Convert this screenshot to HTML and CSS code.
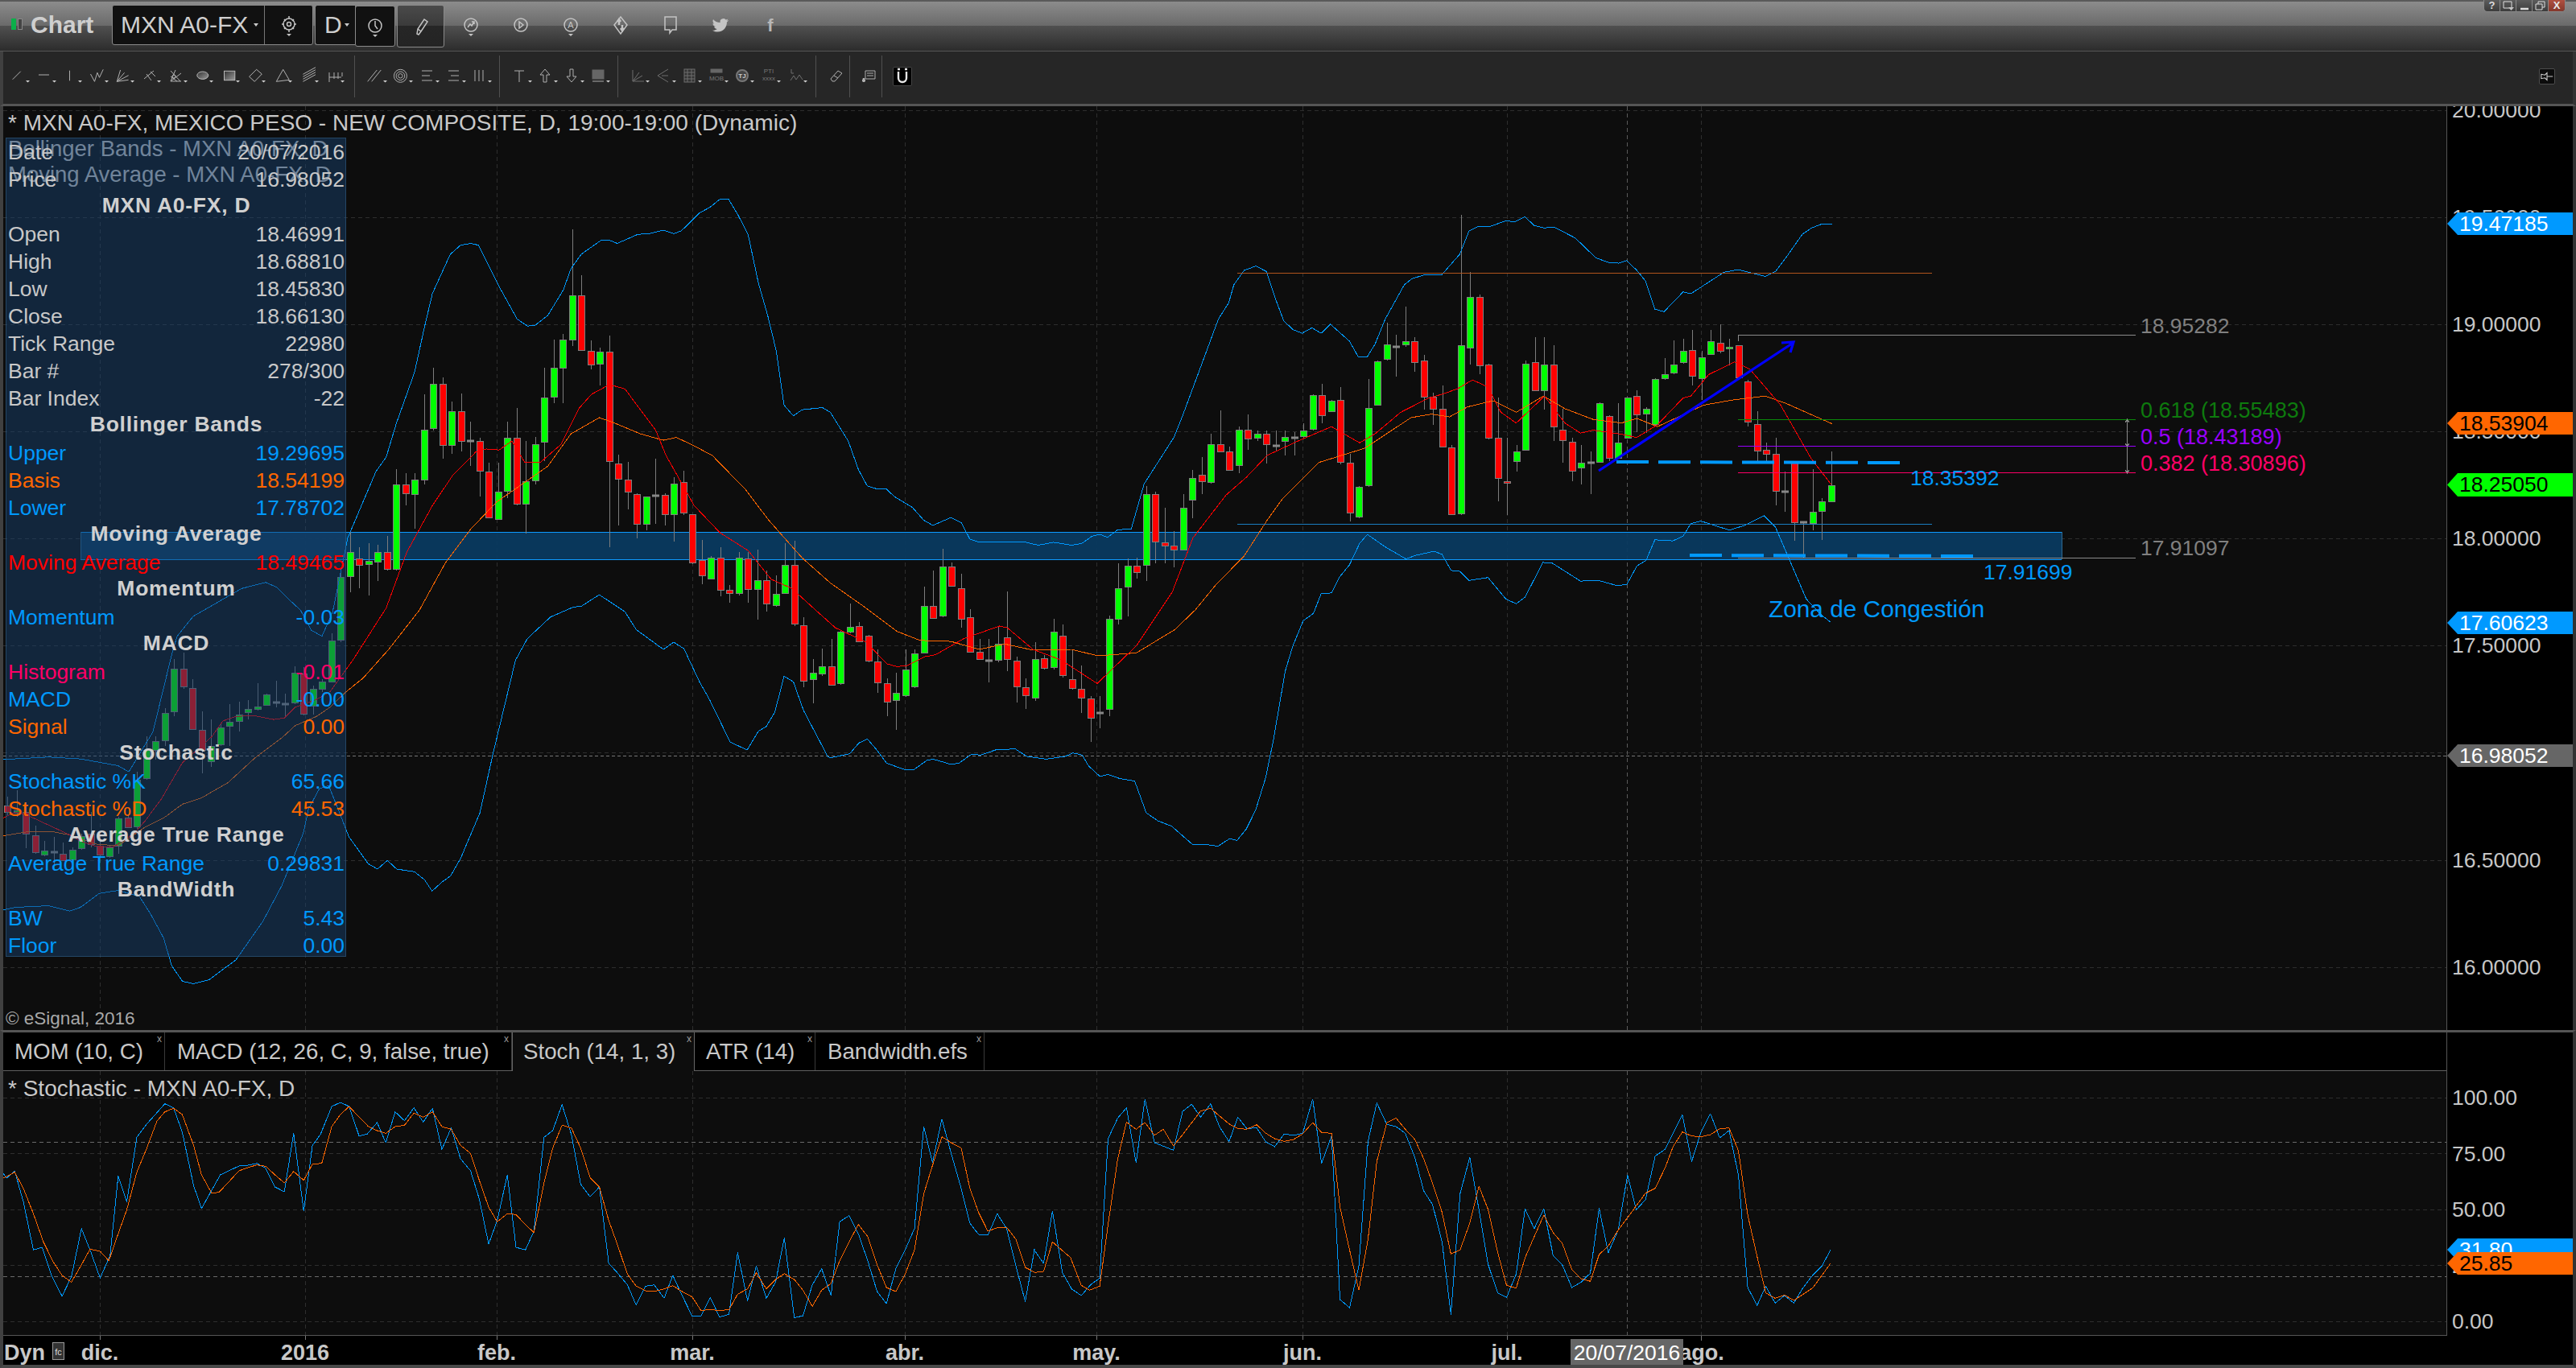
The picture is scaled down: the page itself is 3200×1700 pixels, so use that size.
FILE: index.html
```html
<!DOCTYPE html>
<html lang="es">
<head>
<meta charset="utf-8">
<title>Chart</title>
<link rel="stylesheet" href="styles.css">
</head>
<body>
<svg class="defs" width="0" height="0"><defs>
  <path id="dd" d="M27 17h5l-2.5 2.5z"/>
  <linearGradient id="shade" x1="0" y1="0" x2="1" y2="1"><stop offset="0" stop-color="#333"/><stop offset="1" stop-color="#999"/></linearGradient>
</defs></svg>
<div class="app">
  <header class="titlebar">
    <div class="led"><i class="led-on"></i><i class="led-off"></i></div>
    <div class="app-name">Chart</div>
    <div class="box box-symbol">
      <span class="sym">MXN A0-FX</span><span class="caret"></span>
      <span class="box-icon"><svg class="tb-ic" viewBox="0 0 24 28"><circle cx="12" cy="13" r="7"/><circle cx="12" cy="13" r="2.5"/><path d="M12 3v3M12 20v3M3 13h3M18 13h3M6 7l2 2M18 7l-2 2M6 19l2-2M18 19l-2-2"/><path class="solid" d="M9 25h6l-3 3z"/></svg></span>
    </div>
    <div class="box box-int"><span class="sym">D</span><span class="caret"></span></div>
    <div class="box box-clock"><svg class="tb-ic" viewBox="0 0 24 28"><circle cx="12" cy="13" r="8"/><path d="M12 7v6l3 4"/><path class="solid" d="M9 24h6l-3 3z"/></svg></div>
    <div class="box box-pen"><svg class="tb-ic" viewBox="0 0 24 28"><path d="M9 24l-2-1 1-6L16 5l4 3-8 12zM8 17l4 3"/></svg></div>
    <div class="title-icons">
      <svg class="tb-ic" viewBox="0 0 24 28"><circle cx="12" cy="13" r="8"/><path d="M8 16l3-4 2 2 3-5M13 9h3v3"/><path class="solid" d="M9 24h6l-3 3z"/></svg>
      <svg class="tb-ic" viewBox="0 0 24 28"><circle cx="12" cy="13" r="8"/><path d="M10 9l5 4-5 4z"/></svg>
      <svg class="tb-ic" viewBox="0 0 24 28"><circle cx="12" cy="13" r="8"/><text class="ic-txt" x="12" y="17" text-anchor="middle">A</text><path class="solid" d="M9 24h6l-3 3z"/></svg>
      <svg class="tb-ic" viewBox="0 0 24 28"><path d="M12 3l8 10-8 11-8-11z"/><path class="thick" d="M10 7v6M14 13v6M8 9l2-3 2 3M12 17l2 3 2-3"/></svg>
      <svg class="tb-ic" viewBox="0 0 24 28"><path d="M5 3h14v16h-5l-3 4v-4H5z"/></svg>
      <svg class="tb-ic" viewBox="0 0 24 28"><path class="solid" d="M22 7c-1 .5-1.600.6-2.500.7 1-.6 1.500-1.300 1.800-2.200-.9.500-1.800.9-2.700 1a4 4 0 0 0-6.900 3.600C8 10 5 8.500 3 6c-1 2-.5 4.300 1.300 5.500-.7 0-1.300-.2-1.800-.5 0 2 1.400 3.700 3.300 4.100-.6.200-1.200.2-1.800.1.500 1.600 2 2.800 3.800 2.800C6 19.200 4 20 2 19.700 4 21 6 21.600 8.500 21.600c7.500 0 11.700-6.300 11.400-12C20.700 9 21.500 8 22 7z"/></svg>
      <svg class="tb-ic" viewBox="0 0 24 28"><text class="fb" x="12" y="21" text-anchor="middle">f</text></svg>
    </div>
    <div class="win-btns">
      <span class="win-btn">?</span>
      <span class="win-btn"><svg class="win-ic" viewBox="0 0 14 12"><path d="M1 1h10v8H1z"/><path class="solid" d="M7 8h7l-3.500 4z"/></svg></span>
      <span class="win-btn"><svg class="win-ic" viewBox="0 0 14 12"><path class="thick" d="M2 10h10"/></svg></span>
      <span class="win-btn"><svg class="win-ic" viewBox="0 0 14 12"><path d="M1 4h8v7H1zM4 4V1h8v7H9"/></svg></span>
      <span class="win-btn win-close">X</span>
    </div>
  </header>

  <nav class="toolbar">
    <div class="tgroup tg1">
      <svg class="ic" viewBox="0 0 32.600 24"><path d="M10.700 15.700L20.700 5.700"/><use href="#dd"/></svg>
      <svg class="ic" viewBox="0 0 32.600 24"><path d="M10 10h13"/><use href="#dd"/></svg>
      <svg class="ic" viewBox="0 0 32.600 24"><path d="M16.500 4.700v12.600"/><use href="#dd"/></svg>
      <svg class="ic" viewBox="0 0 32.600 24"><path d="M9.500 9l5 9.300L17.900 7.300l2.600 6 4.700-10"/><use href="#dd"/></svg>
      <svg class="ic" viewBox="0 0 32.600 24"><path d="M10.300 18.300L14.600 4M10.300 18.300L19.600 7.300M10.300 18.300L24.600 10.700M10.300 18.300l14.300-2"/><use href="#dd"/></svg>
      <svg class="ic" viewBox="0 0 32.600 24"><path d="M11 15L23 5M14 9l6 8M19 6l6 6"/><use href="#dd"/></svg>
      <svg class="ic" viewBox="0 0 32.600 24"><path d="M11 18L17 4M11 18L24 8M11 18h13M11 5l12 13M11 12l8 6"/><circle cx="15" cy="12" r="2"/><use href="#dd"/></svg>
      <svg class="ic" viewBox="0 0 32.600 24"><ellipse class="shaded" cx="18.800" cy="10.700" rx="7" ry="4.700"/><use href="#dd"/></svg>
      <svg class="ic" viewBox="0 0 32.600 24"><rect class="shaded" x="12.500" y="5.300" width="13.300" height="11.400"/><use href="#dd"/></svg>
      <svg class="ic" viewBox="0 0 32.600 24"><path d="M11.600 12.300l9-9 6.700 5.700-9 9.300z"/><use href="#dd"/></svg>
      <svg class="ic" viewBox="0 0 32.600 24"><path d="M20.700 3.300l7.600 13-16 2z"/><use href="#dd"/></svg>
      <svg class="ic" viewBox="0 0 32.600 24"><path d="M12.400 9.300L28 .7M12.400 12.300L28 3.700M12.400 15.300L28 6.700M12.400 18.300L28 9.700"/><use href="#dd"/></svg>
      <svg class="ic" viewBox="0 0 32.600 24"><path d="M13 7v12M13 13h15M19 7v8M24 7v8M29 7v5"/><use href="#dd"/></svg>
    </div>
    <div class="tgroup tg2">
      <svg class="ic" viewBox="0 0 32.600 24"><path d="M7.700 18.300L19.300 4M12.700 18.300L24.300 4"/><use href="#dd"/></svg>
      <svg class="ic" viewBox="0 0 32.600 24"><circle cx="16.400" cy="11.300" r="8"/><circle cx="16.400" cy="11.300" r="5.300"/><circle cx="16.400" cy="11.300" r="2.700"/><use href="#dd"/></svg>
      <svg class="ic" viewBox="0 0 32.600 24"><path d="M10 5h13M10 11h10M10 17h13"/><use href="#dd"/></svg>
      <svg class="ic" viewBox="0 0 32.600 24"><path d="M10 5h13M13 11h10M10 17h13"/><use href="#dd"/></svg>
      <svg class="ic" viewBox="0 0 32.600 24"><path d="M11 4v14M16 4v14M21 4v14"/><use href="#dd"/></svg>
    </div>
    <div class="tgroup tg3">
      <svg class="ic" viewBox="0 0 32.600 24"><path d="M10 5h12M16 5v14"/><use href="#dd"/></svg>
      <svg class="ic" viewBox="0 0 32.600 24"><path d="M16 3l6 7h-4v9h-4v-9h-4z"/><use href="#dd"/></svg>
      <svg class="ic" viewBox="0 0 32.600 24"><path d="M16 19l6-7h-4V3h-4v9h-4z"/><use href="#dd"/></svg>
      <svg class="ic" viewBox="0 0 32.600 24"><rect class="block" x="10" y="4" width="14" height="11"/><path d="M10 18h14"/><use href="#dd"/></svg>
    </div>
    <div class="tgroup tg4 dim">
      <svg class="ic" viewBox="0 0 32.600 24"><path d="M11 18V4M11 18L19 7M11 18l12-7M11 18h14"/><use href="#dd"/></svg>
      <svg class="ic" viewBox="0 0 32.600 24"><path d="M9 11L22 3M9 11l13 8M14 11h8"/><use href="#dd"/></svg>
      <svg class="ic" viewBox="0 0 32.600 24"><rect class="grid-ic" x="10" y="3" width="13" height="16"/><path d="M10 7h13M10 11h13M10 15h13M14 3v16M19 3v16"/><use href="#dd"/></svg>
      <svg class="ic" viewBox="0 0 32.600 24"><rect class="block" x="10" y="3" width="14" height="4"/><text class="mini" x="17" y="17" text-anchor="middle">MOB</text><use href="#dd"/></svg>
      <svg class="ic" viewBox="0 0 32.600 24"><circle class="solid-c" cx="17" cy="11" r="7"/><text class="mini mini-b" x="17" y="14" text-anchor="middle">TJ</text><use href="#dd"/></svg>
      <svg class="ic" viewBox="0 0 32.600 24"><text class="mini" x="17" y="8" text-anchor="middle">PTI</text><text class="mini" x="17" y="17" text-anchor="middle">xxxx</text><use href="#dd"/></svg>
      <svg class="ic" viewBox="0 0 32.600 24"><path d="M12 3v5h3M11 17l4-6 3 5 4-6 4 6"/><use href="#dd"/></svg>
    </div>
    <div class="tgroup tg5">
      <svg class="ic" viewBox="0 0 32.600 24"><path d="M10 15L19 5l5 3-9 10h-3zM14 11l5 3"/></svg>
    </div>
    <div class="tgroup tg6">
      <svg class="ic" viewBox="0 0 32.600 24"><path d="M12 5h12v10H12zM14 8h8M14 11h8"/><path class="thick" d="M10 14v5M8 17h4"/></svg>
    </div>
    <div class="magnet"><svg class="mag-ic" viewBox="0 0 22 22"><path d="M6 5v8a5 5 0 0 0 10 0V5"/><path d="M5 2h3M14 2h3"/></svg></div>
    <div class="pin"><svg class="pin-ic" viewBox="0 0 20 20"><path d="M2 7l5 1 3-3v10l-3-3-5 1zM10 10h8"/></svg></div>
  </nav>

  <section class="pane pane-main">
    <div class="plot">
      <svg class="chart" viewBox="4 132 3035 1148" width="3035" height="1148">
        <g id="main-grid" class="grid"></g>
        <path class="cross-h" d="M4 939.500H3039"/>
        <rect class="zone" x="100" y="661" width="2461" height="34"/>
        <path class="zone-edge" d="M100 661.500H2561M100 695.500H2561"/>
        <path class="zone-end" d="M100.500 661V695M2561.500 661V695"/>
        <g id="candles"></g>
        <g id="main-lines"></g>
        <path class="ln-res" d="M1537 339.500H2400"/>
        <path class="ln-sup" d="M1537 651.500H2400"/>
        <path class="ln-fib gray" d="M2159 424V416.500H2653M2159 693.500H2653"/>
        <path class="ln-fib green" d="M2159 521.500H2653"/>
        <path class="ln-fib purple" d="M2159 554.500H2653"/>
        <path class="ln-fib pink" d="M2159 587.500H2653"/>
        <path class="ln-fib gray" d="M2642.500 522V587M2640 525l2.500-4 2.500 4M2640 584l2.500 4 2.500-4M2640 551l2.500 4 2.500-4"/>
        <path class="ln-dash" d="M2008 574L2360 575"/>
        <path class="ln-dash" d="M2099 690L2451 691"/>
        <path class="ln-arrow" d="M1986 585L2226 427M2213 426L2228 425 2224 438"/>
        <text class="lbl l-blue" x="2373" y="603">18.35392</text>
        <text class="lbl l-blue" x="2464" y="720">17.91699</text>
        <text class="lbl l-gray" x="2659" y="414">18.95282</text>
        <text class="lbl-fib l-green" x="2659" y="519">0.618 (18.55483)</text>
        <text class="lbl-fib l-purple" x="2659" y="552">0.5 (18.43189)</text>
        <text class="lbl-fib l-pink" x="2659" y="585">0.382 (18.30896)</text>
        <text class="lbl l-gray" x="2659" y="690">17.91097</text>
        <text class="lbl-zone" x="2197" y="767">Zona de Congestión</text>
      </svg>
      <div class="plot-head">
        <div class="head-main">* MXN A0-FX, MEXICO PESO - NEW COMPOSITE, D, 19:00-19:00 (Dynamic)</div>
        <div>Bollinger Bands - MXN A0-FX, D</div>
        <div>Moving Average - MXN A0-FX, D</div>
      </div>
      <aside class="legend">
        <div class="row"><span>Date</span><span>20/07/2016</span></div>
        <div class="row"><span>Price</span><span>16.98052</span></div>
        <div class="hdr">MXN A0-FX, D</div>
        <div class="row"><span>Open</span><span>18.46991</span></div>
        <div class="row"><span>High</span><span>18.68810</span></div>
        <div class="row"><span>Low</span><span>18.45830</span></div>
        <div class="row"><span>Close</span><span>18.66130</span></div>
        <div class="row"><span>Tick Range</span><span>22980</span></div>
        <div class="row"><span>Bar #</span><span>278/300</span></div>
        <div class="row"><span>Bar Index</span><span>-22</span></div>
        <div class="hdr">Bollinger Bands</div>
        <div class="row c-blue"><span>Upper</span><span>19.29695</span></div>
        <div class="row c-orange"><span>Basis</span><span>18.54199</span></div>
        <div class="row c-blue"><span>Lower</span><span>17.78702</span></div>
        <div class="hdr">Moving Average</div>
        <div class="row c-red"><span>Moving Average</span><span>18.49465</span></div>
        <div class="hdr">Momentum</div>
        <div class="row c-blue"><span>Momentum</span><span>-0.03</span></div>
        <div class="hdr">MACD</div>
        <div class="row c-pink"><span>Histogram</span><span>-0.01</span></div>
        <div class="row c-blue"><span>MACD</span><span>-0.00</span></div>
        <div class="row c-orange"><span>Signal</span><span>0.00</span></div>
        <div class="hdr">Stochastic</div>
        <div class="row c-blue"><span>Stochastic %K</span><span>65.66</span></div>
        <div class="row c-orange"><span>Stochastic %D</span><span>45.53</span></div>
        <div class="hdr">Average True Range</div>
        <div class="row c-blue"><span>Average True Range</span><span>0.29831</span></div>
        <div class="hdr">BandWidth</div>
        <div class="row c-blue"><span>BW</span><span>5.43</span></div>
        <div class="row c-blue"><span>Floor</span><span>0.00</span></div>
      </aside>
      <div class="copyright">© eSignal, 2016</div>
    </div>
    <div class="axis axis-main">
      <div class="tick">20.00000</div>
      <div class="tick">19.50000</div>
      <div class="tick">19.00000</div>
      <div class="tick">18.50000</div>
      <div class="tick">18.00000</div>
      <div class="tick">17.50000</div>
      <div class="tick">17.00000</div>
      <div class="tick">16.50000</div>
      <div class="tick">16.00000</div>
      <div class="tag tag-blue m1">19.47185</div>
      <div class="tag tag-orange m2">18.53904</div>
      <div class="tag tag-green m3">18.25050</div>
      <div class="tag tag-blue m4">17.60623</div>
      <div class="tag tag-gray m5">16.98052</div>
    </div>
  </section>

  <section class="tabs-row">
    <div class="tabs">
      <div class="tab t-mom">MOM (10, C)<span class="tab-x">x</span></div>
      <div class="tab t-macd">MACD (12, 26, C, 9, false, true)<span class="tab-x">x</span></div>
      <div class="tab t-stoch tab-active">Stoch (14, 1, 3)<span class="tab-x">x</span></div>
      <div class="tab t-atr">ATR (14)<span class="tab-x">x</span></div>
      <div class="tab t-band">Bandwidth.efs<span class="tab-x">x</span></div>
    </div>
    <div class="tabs-axis"></div>
  </section>

  <section class="pane pane-stoch">
    <div class="plot plot-stoch">
      <svg class="chart" viewBox="4 1331 3035 328" width="3035" height="328">
        <g id="stoch-grid" class="grid"></g>
        <g id="stoch-lines"></g>
      </svg>
      <div class="stoch-title">* Stochastic - MXN A0-FX, D</div>
    </div>
    <div class="axis axis-stoch">
      <div class="tick">100.00</div>
      <div class="tick">75.00</div>
      <div class="tick">50.00</div>
      <div class="tick">25.00</div>
      <div class="tick">0.00</div>
      <div class="tag tag-blue s1">31.80</div>
      <div class="tag tag-orange s2">25.85</div>
    </div>
  </section>

  <footer class="timeaxis">
    <svg class="time-svg" viewBox="4 1660 3192 36" width="3192" height="36">
      <path class="time-ticks" d="M124.500 1660v5M379.500 1660v5M617.500 1660v5M860.500 1660v5M1124.500 1660v5M1362.500 1660v5M1618.500 1660v5M1872.500 1660v5M2113.500 1660v6"/>
      <text class="t-lbl" x="5" y="1690">Dyn</text>
      <rect class="dyn-box" x="65.500" y="1668.500" width="14" height="21"/>
      <text class="dyn-mini" x="72.500" y="1684" text-anchor="middle">fc</text>
      <text class="t-lbl" x="124" y="1690" text-anchor="middle">dic.</text>
      <text class="t-lbl" x="379" y="1690" text-anchor="middle">2016</text>
      <text class="t-lbl" x="617" y="1690" text-anchor="middle">feb.</text>
      <text class="t-lbl" x="860" y="1690" text-anchor="middle">mar.</text>
      <text class="t-lbl" x="1124" y="1690" text-anchor="middle">abr.</text>
      <text class="t-lbl" x="1362" y="1690" text-anchor="middle">may.</text>
      <text class="t-lbl" x="1618" y="1690" text-anchor="middle">jun.</text>
      <text class="t-lbl" x="1872" y="1690" text-anchor="middle">jul.</text>
      <text class="t-lbl" x="2114" y="1690" text-anchor="middle">ago.</text>
      <rect class="cur-box" x="1951" y="1664" width="140" height="32"/>
      <text class="cur-lbl" x="2021" y="1690" text-anchor="middle">20/07/2016</text>
    </svg>
  </footer>
</div>
<script src="chart.js"></script>
</body>
</html>
```

FILE: styles.css
```css
* { box-sizing: border-box; }
html, body { margin: 0; padding: 0; background: #000; }
body { width: 3200px; height: 1700px; overflow: hidden; font-family: "Liberation Sans", Arial, sans-serif; color: #c8c8c8; }
.defs { position: absolute; }
.app { width: 3200px; height: 1700px; display: flex; flex-direction: column; }

/* title bar */
.titlebar { height: 64px; flex: none; display: flex; align-items: flex-start; padding-left: 14px; border-top: 2px solid #5a5a5a; border-bottom: 1px solid #555;
  background: linear-gradient(#8c8c8c 0, #6a6a6a 30px, #505050 30px, #2c2c2c 61px); }
.led { display: flex; gap: 2px; margin-top: 21px; width: 24px; }
.led i { display: block; width: 6px; height: 14px; }
.led-on { background: #0bb04a; }
.led-off { border: 1px solid #888; background: #444; }
.app-name { font-weight: 700; font-size: 30px; line-height: 30px; margin-top: 14px; color: #cfcfcf; width: 101px; }
.box { background: #111; border: 1px solid #8a8a8a; border-radius: 3px; display: flex; align-items: center; height: 50px; margin-top: 4px; }
.box-symbol { width: 250px; padding-left: 10px; }
.box-int { width: 50px; padding-left: 11px; margin-left: 2px; border-right: 0; border-radius: 3px 0 0 3px; }
.box-clock { width: 50px; height: 51px; margin-top: 5px; justify-content: center; }
.box-pen { width: 59px; height: 53px; margin: 4px 0 0 2px; justify-content: center; background: linear-gradient(#4a4a4a 0, #3a3a3a 50%, #262626 50%, #242424); }
.sym { font-size: 30px; color: #cfcfcf; white-space: nowrap; flex: none; }
.caret { width: 0; height: 0; flex: none; border: 3px solid transparent; border-top: 4px solid #ccc; border-bottom: 0; margin-left: 7px; }
.box-int .caret { margin-left: 3px; }
.box-icon { margin-left: auto; width: 60px; flex: none; height: 100%; border-left: 1px solid #777; display: flex; align-items: center; justify-content: center; }
.tb-ic { width: 24px; height: 28px; fill: none; stroke: #c4c4c4; stroke-width: 1.500; flex: none; }
.solid { fill: #c4c4c4; stroke: none; }
.thick { stroke-width: 2.500; }
.ic-txt { font-size: 11px; fill: #c4c4c4; stroke: none; }
.fb { font-weight: 700; font-size: 22px; fill: #b8b8b8; stroke: none; }
.title-icons { display: flex; gap: 38px; margin: 16px 0 0 21px; }
.win-btns { margin: -2px 13px 0 auto; display: flex; height: 15px; border: 1px solid #888; border-top: 0; border-radius: 0 0 5px 5px; overflow: hidden; background: linear-gradient(#5c5c5c, #3c3c3c); }
.win-btn { width: 20px; display: flex; align-items: center; justify-content: center; font-size: 13px; font-weight: 700; line-height: 14px; color: #ddd; border-right: 1px solid #888; }
.win-ic { width: 14px; height: 12px; fill: none; stroke: #ddd; stroke-width: 1; }
.win-close { border-right: 0; background: linear-gradient(#b05040, #84382c); color: #e8e8e8; }

/* tool bar */
.toolbar { height: 68px; flex: none; display: flex; align-items: center; background: #262626; border-left: 4px solid #404040; border-right: 4px solid #333; border-bottom: 3px solid #555; padding-left: 1px; }
.tgroup { display: flex; align-items: center; height: 52px; border-right: 1px solid #505050; margin-top: -3px; }
.tg1 { padding-right: 11px; }
.tg2 { padding: 0 8px; }
.tg3 { padding: 0 8px; }
.tg4 { padding: 0 10px 0 7px; }
.tg5 { padding: 0 0 0 8px; }
.tg6 { padding: 0 0 0 7px; }
.ic { width: 32.600px; height: 24px; flex: none; fill: none; stroke: #b0b0b0; stroke-width: 1; }
.ic use { fill: #d0d0d0; stroke: none; }
.dim .ic { stroke: #6e6e6e; }
.shaded { fill: url(#shade); stroke: #bbb; }
.block { fill: #666; stroke: #666; }
.grid-ic { fill: #333; }
.solid-c { fill: #444; stroke: #777; stroke-width: 2; }
.mini { font-size: 8px; fill: #777; stroke: none; }
.mini-b { fill: #ccc; font-weight: 700; }
.magnet { width: 24px; height: 24px; margin: -3px 0 0 13px; background: #000; border: 1px solid #444; border-radius: 2px; display: flex; align-items: center; justify-content: center; }
.mag-ic { width: 22px; height: 22px; fill: none; stroke: #e6e6e6; stroke-width: 2.400; }
.pin { margin: -3px 22px 0 auto; width: 20px; height: 20px; background: #0c0c0c; border: 1px solid #4c4c4c; border-radius: 2px; }
.pin-ic { display: block; width: 18px; height: 18px; fill: none; stroke: #ccc; stroke-width: 1.200; }

/* panes */
.pane { display: flex; flex: none; border-left: 4px solid #404040; border-right: 4px solid #333; }
.pane-main { height: 1148px; }
.pane-stoch { height: 329px; }
.plot { position: relative; width: 3035px; flex: none; background: #0d0d0d; overflow: hidden; }
.plot-stoch { border-bottom: 1px solid #555; }
.chart { position: absolute; left: 0; top: 0; display: block; }
.axis { position: relative; flex: 1; background: #000; border-left: 1px solid #555; overflow: hidden; }
.tick { padding-left: 6px; font-size: 26.500px; color: #c6c6c6; display: flex; align-items: center; }
.axis-main .tick { height: 133.200px; }
.axis-main .tick:first-child { margin-top: -61.600px; }
.axis-stoch .tick { height: 69.500px; }
.axis-stoch .tick:first-child { margin-top: -1.200px; }
.axis-stoch { border-left: 1px solid #555; }
.tag { position: absolute; left: 0; right: 0; height: 28px; line-height: 28px; font-size: 26.500px; padding-left: 15px; clip-path: polygon(0 50%, 13px 0, 100% 0, 100% 100%, 13px 100%); }
.tag-blue { background: #0099ff; color: #fff; }
.tag-orange { background: #ff6600; color: #000; }
.tag-green { background: #00ff00; color: #000; height: 29px; }
.tag-gray { background: #666; color: #fff; }
.m1 { top: 132px; } .m2 { top: 380px; } .m3 { top: 456px; } .m4 { top: 628px; } .m5 { top: 793px; }
.s1 { top: 208px; } .s2 { top: 225px; }

/* chart overlays */
.plot-head { position: absolute; left: 6px; top: 5px; font-size: 27.500px; line-height: 32px; color: #c8c8c8; white-space: nowrap; }
.head-main { font-size: 28px; }
.stoch-title { position: absolute; left: 6px; top: 6px; font-size: 28px; line-height: 32px; color: #c8c8c8; }
.copyright { position: absolute; left: 3px; bottom: 0; font-size: 22.500px; line-height: 28px; color: #a8a8a8; }
.legend { position: absolute; left: 3px; top: 39px; width: 423px; height: 1018px; padding: 0 1px 0 2px; background: rgba(24, 64, 108, .5); border: 1px solid rgba(60, 110, 150, .45); }
.row { display: flex; justify-content: space-between; height: 34px; line-height: 34px; font-size: 26.500px; white-space: nowrap; }
.hdr { height: 34px; margin: -2px 0 2px; line-height: 34px; font-size: 26.500px; font-weight: 700; letter-spacing: .75px; text-align: center; white-space: nowrap; color: #d0d0d0; }
.c-blue { color: #0099ff; }
.c-orange { color: #ff6600; }
.c-red { color: #ff0000; }
.c-pink { color: #ff0066; }

/* svg chart parts */
.grid path { fill: none; stroke: #2e2e2e; stroke-width: 1; stroke-dasharray: 5 4; shape-rendering: crispEdges; }
.grid path.strong { stroke: #6a6a6a; }
.grid path.cross { stroke: #5a5a5a; }
.cross-h { fill: none; stroke: #777; stroke-width: 1; stroke-dasharray: 4 3; shape-rendering: crispEdges; }
.zone { fill: #0a3a60; fill-opacity: .95; }
.zone-edge { fill: none; stroke: #0d9aff; stroke-width: 1.500; shape-rendering: crispEdges; }
.zone-end { fill: none; stroke: #2f6a92; stroke-width: 1; shape-rendering: crispEdges; }
.wick { stroke: #7c7c7c; stroke-width: 1; shape-rendering: crispEdges; }
.body { stroke: #808080; stroke-width: 1; shape-rendering: crispEdges; }
.up { fill: #00ff00; }
.down { fill: #ff0000; }
.flat { fill: #888; stroke: #888; }
.ln { fill: none; stroke-width: 1; stroke-linejoin: round; shape-rendering: crispEdges; }
.ln-blue { stroke: #0099ff; }
.ln-orange { stroke: #ff6600; }
.ln-red { stroke: #ff0000; }
.ln-res { fill: none; stroke: #b0541c; stroke-width: 1.500; shape-rendering: crispEdges; }
.ln-sup { fill: none; stroke: #1a7cc0; stroke-width: 1.500; shape-rendering: crispEdges; }
.ln-fib { fill: none; stroke-width: 1; shape-rendering: crispEdges; }
.gray { stroke: #8a8a8a; }
.green { stroke: #0a8a0a; }
.purple { stroke: #9900ff; }
.pink { stroke: #ff0066; }
.ln-dash { fill: none; stroke: #0099ff; stroke-width: 4; stroke-dasharray: 40 12; }
.ln-arrow { fill: none; stroke: #0000ff; stroke-width: 3.200; }
.lbl { font-size: 26.500px; }
.lbl-fib { font-size: 27px; }
.l-blue { fill: #0099ff; }
.l-gray { fill: #808080; }
.l-green { fill: #0d7a0d; }
.l-purple { fill: #9900ff; }
.l-pink { fill: #ff0066; }
.lbl-zone { font-size: 29.800px; fill: #0099ff; }

/* tabs */
.tabs-row { height: 51px; flex: none; display: flex; background: #000; border-top: 3px solid #555; border-left: 4px solid #404040; border-right: 4px solid #333; }
.tabs { width: 3035px; flex: none; display: flex; border-bottom: 1px solid #606060; }
.tabs-axis { flex: 1; border-left: 1px solid #555; }
.tab { position: relative; height: 47px; line-height: 47px; font-size: 27.700px; color: #c8c8c8; border-right: 1px solid #3a3a3a; white-space: nowrap; }
.tab-active { background: #0d0d0d; height: 48px; border-left: 1px solid #666; border-right: 1px solid #666; }
.t-mom { width: 201px; padding-left: 14px; }
.t-macd { width: 431px; padding-left: 15px; }
.t-stoch { width: 227px; padding-left: 13px; }
.t-atr { width: 150px; padding-left: 14px; }
.t-band { width: 210px; padding-left: 15px; }
.tab-x { position: absolute; right: 3px; top: 2px; font-size: 12px; line-height: 12px; color: #999; }

/* time axis */
.timeaxis { height: 40px; flex: none; background: #000; border-left: 4px solid #404040; border-right: 4px solid #333; border-bottom: 4px solid #484848; }
.time-svg { display: block; }
.time-ticks { fill: none; stroke: #777; stroke-width: 1; shape-rendering: crispEdges; }
.t-lbl { font-size: 27px; font-weight: 700; fill: #c8c8c8; }
.dyn-box { fill: #333; stroke: #999; stroke-width: 1; }
.dyn-mini { font-size: 11px; fill: #ddd; }
.cur-box { fill: #666; }
.cur-lbl { font-size: 26.500px; fill: #fff; }
```

FILE: chart.js
```js
// Traced price data, held in the coordinates of the chart at three scales.
var NS = 'http://www.w3.org/2000/svg';
function el(parent, tag, attrs) {
  var e = document.createElementNS(NS, tag);
  for (var k in attrs) e.setAttribute(k, attrs[k]);
  parent.appendChild(e);
  return e;
}
function map(sx, ox, sy, oy) {
  return function (pts) { return pts.map(function (p) { return [ox + p[0] / sx, oy + p[1] / sy]; }); };
}
var A = map(3, 0, 2.613, 630);       // left region
var B = map(1.568, 400, 2.24, 240);  // middle region
var C = map(1.568, 1300, 2.24, 240); // right region
var D = map(1.045, 400, 3, 900);     // lower middle region
var E = map(1.206, 0, 3, 1260);      // stochastic, left
var F = map(2.01, 1280, 3, 1340);    // stochastic, middle
var G = map(1.206, 1900, 3, 1260);   // stochastic, right

// [top, bottom, high, low, kind]  kind: g up, r down, d doji
var barsA = [
[970,990,940,1000,'r'],[985,992,920,1005,'g'],[990,1062,960,1108,'r'],[1065,1120,1035,1125,'r'],[1117,1130,1085,1135,'g'],
[1121,1121,1072,1180,'d'],[1125,1147,1090,1150,'r'],[1112,1145,1105,1150,'g'],[1070,1108,1060,1112,'g'],[1060,1095,990,1105,'r'],
[1100,1130,1070,1155,'r'],[1105,1135,1100,1138,'g'],[1010,1100,1005,1125,'g'],[1008,1040,1000,1042,'r'],[885,1038,860,1045,'g'],
[790,880,745,885,'g'],[760,788,745,820,'g'],[668,758,652,775,'g'],[526,664,495,680,'g'],[526,584,473,590,'r'],
[587,722,558,725,'r'],[725,790,665,865,'r'],[775,825,690,845,'g'],[716,770,700,775,'g'],[697,712,640,775,'g'],
[674,694,632,730,'g'],[655,667,627,690,'g'],[648,655,572,660,'g'],[608,644,606,646,'g'],[634,634,565,650,'d'],
[640,640,605,685,'d'],[538,636,518,640,'g'],[540,672,520,678,'r'],[590,645,580,675,'g'],[568,590,560,600,'g'],
[433,566,410,570,'g'],[228,430,215,438,'g']
];
var barsB = [
[1000,1066,940,1110,'g'],[1016,1034,985,1100,'r'],[1024,1032,975,1120,'g'],[998,1026,978,1080,'g'],[998,1046,955,1050,'r'],
[810,1046,768,1050,'g'],[810,836,780,868,'r'],[798,838,780,935,'g'],[658,798,560,810,'g'],[530,655,485,660,'g'],
[530,700,512,740,'r'],[606,700,580,725,'g'],[606,690,558,720,'r'],[690,690,637,760,'d'],[690,772,680,845,'r'],
[774,902,750,905,'r'],[830,908,750,910,'g'],[680,828,637,850,'g'],[682,864,597,868,'r'],[803,864,690,948,'g'],
[698,800,678,810,'g'],[568,692,487,745,'g'],[487,566,408,585,'g'],[408,485,392,585,'g'],[285,407,100,425,'g'],
[285,436,228,440,'r'],[438,476,410,490,'r'],[442,474,430,535,'g'],[442,746,397,985,'r'],[752,796,728,925,'r'],
[798,832,748,880,'r'],[838,920,835,960,'r'],[845,920,845,938,'g'],[842,842,740,920,'d'],[840,894,835,925,'r'],
[808,894,790,970,'g'],[805,890,773,895,'r'],[893,1028,893,1032,'r'],[1022,1064,965,1088,'r'],[1014,1072,1010,1075,'g'],
[1014,1105,985,1122,'r'],[1105,1114,1090,1140,'r'],[1014,1114,1000,1120,'g'],[1016,1103,1000,1140,'r'],[1078,1103,992,1188,'g'],
[1078,1143,1050,1165,'r'],[1116,1146,1065,1152,'g'],[1034,1114,975,1116,'g'],[1034,1198,968,1205,'r'],[1202,1358,1180,1375,'r'],
[1336,1354,1298,1420,'g'],[1316,1338,1268,1345,'g'],[1316,1368,1240,1372,'r'],[1220,1364,1218,1368,'g'],[1208,1220,1142,1225,'g'],
[1206,1248,1195,1250,'r'],[1232,1302,1230,1305,'r'],[1304,1362,1270,1392,'r'],[1364,1416,1350,1455,'r'],[1392,1412,1335,1495,'g'],
[1326,1398,1270,1402,'g'],[1282,1374,1270,1378,'g'],[1150,1278,1095,1282,'g'],[1148,1182,1050,1185,'r'],[1040,1176,990,1180,'g'],
[1040,1092,1028,1095,'r'],[1100,1184,1060,1210,'r'],[1180,1276,1158,1280,'r'],[1276,1298,1240,1300,'r'],[1301,1301,1240,1362,'d'],
[1255,1300,1205,1305,'g'],[1237,1298,1108,1330,'r'],[1302,1374,1290,1418,'r'],[1376,1398,1350,1436,'r'],[1296,1404,1250,1414,'g'],
[1294,1322,1285,1325,'r'],[1220,1320,1185,1325,'g'],[1232,1342,1200,1348,'r'],[1352,1378,1270,1382,'r'],[1380,1404,1315,1448,'r'],
[1406,1460,1400,1528,'r'],[1448,1448,1400,1490,'d'],[1186,1436,1175,1456,'g'],[1100,1186,1030,1200,'g'],[1038,1096,1016,1178,'g'],
[1038,1056,1015,1072,'r'],[838,1034,815,1080,'g'],[838,970,830,1030,'r'],[972,980,875,1030,'r'],[982,993,940,1042,'r'],
[875,993,838,995,'g'],[792,854,770,905,'g'],[785,803,735,838,'r'],[698,804,670,808,'g'],[698,718,605,720,'r'],
[720,770,705,770,'r'],[658,756,650,780,'g'],[658,684,617,715,'r'],[670,682,660,690,'g'],[670,698,660,752,'r'],
[703,703,660,720,'d'],[678,690,660,730,'g'],[680,680,665,730,'d'],[660,676,640,680,'g'],[562,657,560,660,'g'],
[563,618,530,640,'r'],[578,606,575,610,'g'],[575,748,540,755,'r'],[750,890,725,915,'r'],[817,900,815,905,'g'],
[597,814,518,818,'g'],[469,588,465,592,'g'],[420,462,360,465,'g'],[428,428,395,510,'d'],[413,422,315,428,'g'],
[413,470,400,498,'r'],[465,566,450,602,'r'],[566,600,555,645,'r'],[600,705,535,708,'r'],[708,894,700,895,'r'],
[424,892,60,895,'g'],[290,430,220,478,'g'],[288,480,282,505,'r'],[478,680,475,685,'r'],[680,792,570,858,'r'],
[802,802,680,895,'r'],[718,746,702,775,'g'],[474,714,465,716,'g'],[471,548,400,550,'r'],[476,548,400,603,'g'],
[476,650,423,690,'r'],[658,688,600,750,'r'],[692,772,680,803,'r'],[750,764,700,810,'g'],[750,750,720,838,'d'],
[584,748,582,750,'g'],[620,738,618,745,'r'],[695,736,585,740,'g'],[570,680,568,682,'g'],[564,616,548,665,'r'],
[600,613,595,668,'g'],[518,642,515,648,'g'],[503,516,460,520,'g'],[476,500,410,505,'g'],[438,471,405,475,'g'],
[436,508,380,535,'r'],[456,516,438,575,'g'],[412,448,380,450,'g'],[416,440,365,445,'r'],[427,433,405,480,'g'],
[424,512,423,520,'r'],[524,636,520,650,'r'],[642,716,608,745,'r'],[715,726,695,745,'r'],[725,828,682,868,'r'],
[830,830,775,888,'d'],[745,916,745,968,'r'],[917,917,915,1018,'d'],[886,918,768,938,'g'],[859,884,848,965,'g'],
[814,857,720,860,'g']
];

var bollUpper = [].concat(
  A([[12,820],[180,812],[300,818],[440,840],[480,860],[570,730],[640,480],[660,420],[720,355],[900,265],[990,245],[1030,260],[1070,295],[1120,335],[1160,400],[1200,420],[1240,340]]),
  B([[50,960],[105,775],[125,735],[145,640],[180,500],[200,370],[215,280],[250,170],[270,145],[290,140],[305,145],[345,260],[380,350],[400,370],[415,368],[440,340],[470,270],[485,210],[505,170],[545,130],[558,130],[575,140],[615,115],[640,112],[665,103],[685,113],[700,105],[735,55],[755,40],[775,17],[792,17],[810,60],[830,115],[850,250],[868,340],[885,440],[900,590],[918,620],[935,603],[975,597],[990,610],[1025,690],[1045,770],[1062,815],[1080,823],[1098,822],[1115,845],[1150,875],[1172,910],[1190,925],[1225,903],[1245,917],[1262,963],[1280,972],[1330,972],[1365,970],[1395,980],[1425,972],[1460,980],[1480,975],[1500,955],[1515,950],[1530,958],[1550,937]]),
  C([[165,935],[190,810],[248,680],[265,620],[335,350],[355,305],[365,255],[385,215],[408,203],[428,218],[445,290],[462,355],[480,380],[498,390],[517,375],[535,390],[553,365],[590,412],[607,455],[625,455],[640,420],[660,350],[697,255],[712,238],[735,228],[770,227],[805,170],[823,105],[840,93],[865,92],[895,77],[912,80],[932,66],[950,90],[970,97],[988,94],[1030,125],[1070,180],[1095,193],[1115,195],[1130,188],[1150,215],[1167,245],[1185,323],[1203,330],[1240,275],[1255,280],[1320,220],[1348,213],[1400,232],[1420,218],[1440,180],[1472,115],[1490,97],[1510,86],[1530,86]])
);
var bollLower = [].concat(
  A([[12,1308],[60,1300],[180,1295],[260,1312],[300,1300],[370,1255],[440,1245],[520,1265],[560,1320],[610,1400],[640,1490],[680,1540],[720,1548],[780,1535],[880,1470],[980,1345],[1050,1230],[1130,1060],[1150,980],[1190,915],[1225,905],[1255,970]]),
  D([[35,420],[60,520],[72,540],[85,508],[97,540],[120,550],[133,580],[143,622],[155,590],[167,565],[180,500],[205,330],[222,110]]),
  B([[377,1300],[400,1240],[445,1180],[490,1152],[505,1150],[540,1118],[590,1165],[612,1215],[665,1270],[685,1250],[705,1268],[735,1360],[755,1410],[795,1528],[828,1550],[850,1498],[865,1485],[882,1445],[900,1345],[918,1360],[938,1440],[985,1568]]),
  D([[660,125],[685,110],[697,70],[708,55],[720,95],[733,145],[755,168],[768,170],[785,135],[793,130],[817,150],[827,145],[843,112],[855,115],[875,95],[900,92],[915,120],[940,130],[965,120],[975,107],[987,115],[995,155],[1010,195],[1020,187],[1035,202],[1055,212],[1070,330],[1085,360],[1103,380],[1130,448],[1150,449],[1163,455],[1178,427],[1188,433],[1200,390],[1212,320],[1225,200],[1235,60]]),
  C([[465,1330],[480,1260],[500,1190],[520,1170],[535,1115],[555,1113],[570,1070],[590,1035],[610,975],[625,950],[660,985],[700,1018],[720,1008],[755,997],[770,1005],[788,1050],[805,1053],[823,1078],[860,1070],[895,1130],[915,1143],[932,1125],[967,1028],[985,1030],[1040,1080],[1075,1078],[1110,1092],[1130,1090],[1150,1038],[1168,1022],[1185,965],[1220,968],[1240,955],[1255,920],[1275,913],[1330,938],[1360,925],[1398,898],[1420,930],[1450,1030],[1480,1130],[1510,1175],[1528,1195]])
);
var basis = [].concat(
  A([[12,1068],[100,1055],[200,1055],[260,1065],[360,1095],[440,1100],[540,1040],[610,1010],[680,965],[750,945],[850,895],[950,815],[1050,750],[1100,710],[1180,680],[1230,650],[1290,600]]),
  B([[80,1350],[130,1270],[190,1160],[240,1030],[290,935],[340,860],[410,790],[440,760],[485,670],[540,625],[570,640],[620,670],[665,688],[690,680],[720,700],[760,730],[825,825],[870,910],[935,1015],[990,1085],[1050,1145],[1120,1220],[1165,1245],[1225,1248],[1280,1270],[1330,1255],[1385,1272],[1460,1270]]),
  C([[100,1288],[175,1280],[250,1215],[290,1160],[330,1090],[385,1010],[430,910],[460,850],[530,750],[620,710],[710,625],[750,615],[785,623],[820,595],[870,578],[915,610],[968,565],[1010,600],[1065,630],[1120,640],[1150,627],[1190,650],[1280,590],[1340,575],[1400,565],[1440,585],[1530,642]])
);
var ma = [].concat(
  A([[12,1010],[60,990],[100,1000],[260,1065],[300,1085],[350,1100],[420,1105],[500,1060],[540,1020],[600,950],[680,830],[760,770],[790,745],[830,695],[880,680],[950,678],[1020,690],[1060,685],[1100,650],[1180,625],[1230,600]]),
  B([[60,1300],[125,1155],[165,1000],[215,870],[255,785],[300,720],[320,712],[345,715],[370,690],[395,750],[425,750],[465,700],[500,600],[525,560],[560,533],[590,545],[650,660],[670,730],[725,870],[775,945],[830,995],[875,1075],[915,1100],[965,1165],[1000,1210],[1060,1250],[1100,1310],[1120,1318],[1140,1315],[1175,1290],[1195,1285],[1250,1240],[1320,1205],[1335,1210],[1385,1270],[1440,1300],[1510,1365]]),
  C([[175,1260],[245,1110],[285,960],[350,840],[390,790],[430,730],[490,690],[555,650],[610,695],[640,670],[690,610],[745,570],[770,560],[800,545],[830,520],[860,540],[885,610],[915,640],[970,565],[1010,640],[1040,668],[1065,660],[1115,670],[1150,680],[1190,645],[1240,570],[1255,565],[1290,505],[1340,470],[1370,490],[1430,590],[1490,740],[1528,810]])
);
var stochK = [].concat(
  E([[5,595],[10,612],[22,585],[35,700],[50,880],[63,870],[78,980],[93,1052],[107,980],[122,800],[135,880],[150,985],[165,900],[177,605],[190,700],[205,460],[220,410],[247,335],[260,350],[273,440],[290,640],[302,725],[330,600],[358,567],[370,565],[385,557],[398,575],[412,645],[426,663],[440,445],[455,735],[468,490],[480,450],[497,345],[510,330],[523,345],[538,455],[550,448],[565,405],[578,480],[592,365],[606,398],[620,350],[634,403],[648,352],[662,505],[676,425],[690,540],[705,585],[718,690],[732,858],[745,770],[760,600],[773,870],[787,880],[800,810],[815,460],[828,435],[842,338],[856,450],[870,635],[884,682],[898,645],[912,930],[925,965],[940,1010],[953,1085],[967,1015],[980,1010],[995,1060],[1008,975],[1022,1050],[1037,1127],[1050,1127],[1064,1057],[1078,1130],[1092,1120],[1105,890],[1120,1070],[1133,940],[1148,1060],[1162,1000],[1175,835],[1190,1133],[1203,1125],[1217,1010],[1231,950],[1245,1050],[1258,775],[1272,752],[1286,820],[1300,920],[1314,1035],[1328,1080],[1342,950],[1356,880],[1370,800],[1384,420],[1397,555],[1411,392],[1425,520],[1440,650],[1453,780],[1466,822],[1480,825],[1494,745],[1508,800],[1522,940],[1536,1072],[1550,877]]),
  F([[8,637],[33,690],[55,495],[80,725],[103,785],[127,810],[150,770],[173,745],[194,225],[218,148],[240,110],[264,315],[286,78],[310,240],[357,268],[380,123],[403,97],[425,145],[450,95],[472,180],[496,236],[518,145],[540,187],[565,185],[588,237],[610,255],[634,207],[657,213],[680,205],[705,78],[727,317],[752,215],[773,825],[797,855],[820,700],[843,235],[865,92],[890,172],[913,180],[936,205],[960,295],[982,420],[1004,470],[1028,610],[1050,880],[1073,430],[1097,295],[1120,490],[1143,695],[1167,800],[1189,817],[1213,730],[1235,487],[1258,560],[1282,487],[1305,660],[1328,695],[1352,780],[1375,760],[1398,727],[1420,485],[1443,650],[1468,565],[1491,360],[1513,490],[1536,452],[1560,290]]),
  G([[203,505],[229,375],[243,550],[257,440],[271,372],[285,462],[299,435],[313,600],[327,1020],[341,1087],[354,1015],[368,1078],[382,1050],[396,1078],[410,1020],[424,975],[438,940],[451,880]])
);
var stochD = [].concat(
  E([[5,612],[22,590],[35,650],[50,745],[65,850],[80,925],[93,975],[107,1000],[122,935],[135,877],[150,885],[163,920],[177,820],[190,730],[205,590],[220,500],[235,400],[247,365],[260,352],[273,375],[290,490],[302,600],[317,668],[328,665],[345,620],[358,585],[372,572],[385,563],[398,568],[412,600],[426,630],[440,587],[455,620],[468,560],[482,557],[497,420],[510,375],[523,345],[538,385],[552,420],[565,435],[578,445],[592,420],[606,415],[620,370],[634,385],[648,365],[662,420],[676,430],[690,490],[705,520],[718,620],[732,720],[745,775],[760,745],[773,748],[787,785],[800,815],[815,630],[828,500],[842,415],[856,425],[870,500],[884,610],[898,645],[912,770],[925,860],[940,970],[953,1015],[967,1032],[980,1035],[995,1025],[1008,1013],[1022,1035],[1037,1055],[1050,1105],[1064,1103],[1078,1105],[1092,1103],[1105,1045],[1120,1025],[1133,965],[1148,1025],[1162,990],[1175,968],[1190,990],[1203,1030],[1217,1090],[1231,1030],[1245,1005],[1258,920],[1272,850],[1286,785],[1300,830],[1314,935],[1328,1020],[1342,1035],[1356,970],[1370,880],[1384,670],[1397,565],[1411,458],[1425,480],[1440,500],[1453,650],[1466,740],[1480,810],[1494,797],[1508,795],[1522,840],[1536,945],[1550,963]]),
  F([[10,724],[33,720],[55,610],[78,640],[100,668],[127,772],[148,790],[173,775],[194,545],[218,300],[240,163],[264,190],[286,165],[310,212],[332,190],[357,252],[380,210],[425,122],[450,112],[472,140],[496,170],[518,187],[540,190],[565,173],[588,205],[610,225],[634,235],[657,228],[680,207],[705,165],[727,202],[752,205],[773,480],[797,640],[820,790],[843,600],[865,310],[890,165],[913,148],[936,190],[960,228],[982,300],[1004,390],[1028,500],[1050,655],[1073,640],[1097,540],[1120,403],[1143,490],[1167,650],[1189,772],[1213,782],[1235,670],[1258,590],[1282,510],[1305,575],[1328,615],[1352,713],[1375,747],[1398,757],[1420,657],[1443,625],[1468,565],[1491,520],[1513,475],[1536,428],[1560,410]]),
  G([[203,575],[215,495],[229,440],[243,455],[257,458],[271,450],[285,428],[299,425],[313,510],[327,750],[341,905],[354,1040],[368,1060],[382,1048],[396,1068],[410,1045],[424,1022],[438,975],[451,930]])
);

function poly(parent, pts, cls) {
  var d = pts.map(function (p, i) { return (i ? 'L' : 'M') + p[0].toFixed(1) + ' ' + p[1].toFixed(1); }).join('');
  el(parent, 'path', { d: d, 'class': cls });
}
function gridLines(parent, xs, ys, top, bottom, right, strong) {
  xs.forEach(function (x) { el(parent, 'path', { d: 'M' + (x + .5) + ' ' + top + 'V' + bottom }); });
  ys.forEach(function (y) { el(parent, 'path', { d: 'M4 ' + (y + .5) + 'H' + right }); });
  (strong || []).forEach(function (y) { el(parent, 'path', { d: 'M4 ' + (y + .5) + 'H' + right, 'class': 'strong' }); });
  el(parent, 'path', { d: 'M2021.5 ' + top + 'V' + bottom, 'class': 'cross' });
}

var months = [124, 379, 617, 860, 1124, 1362, 1618, 1872, 2113];
gridLines(document.getElementById('main-grid'), months, [137, 270, 403, 536, 669, 802, 935, 1069, 1202], 132, 1280, 3039);
gridLines(document.getElementById('stoch-grid'), months, [1364, 1433, 1503, 1572, 1642], 1331, 1659, 3039, [1419, 1586]);

var cg = document.getElementById('candles');
function drawBars(bars, scale, offset, firstX) {
  bars.forEach(function (b, i) {
    var x = Math.round(firstX + i * 11.5);
    var y = function (v) { return Math.round(offset + v / scale); };
    el(cg, 'path', { d: 'M' + (x + .5) + ' ' + y(b[2]) + 'V' + y(b[3]), 'class': 'wick' });
    if (b[4] === 'd') {
      el(cg, 'rect', { x: x - 3.5, y: y(b[0]) - 1, width: 8, height: 2, 'class': 'flat' });
    } else {
      el(cg, 'rect', { x: x - 3.5, y: y(b[0]) + .5, width: 8, height: Math.max(y(b[1]) - y(b[0]), 2), 'class': 'body ' + (b[4] === 'g' ? 'up' : 'down') });
    }
  });
}
drawBars(barsA, 2.613, 630, 9);
drawBars(barsB, 2.24, 240, 434.5);

var ml = document.getElementById('main-lines');
poly(ml, basis, 'ln ln-orange');
poly(ml, ma, 'ln ln-red');
poly(ml, bollUpper, 'ln ln-blue');
poly(ml, bollLower, 'ln ln-blue');

var sl = document.getElementById('stoch-lines');
poly(sl, stochK, 'ln ln-blue');
poly(sl, stochD, 'ln ln-orange');
```
